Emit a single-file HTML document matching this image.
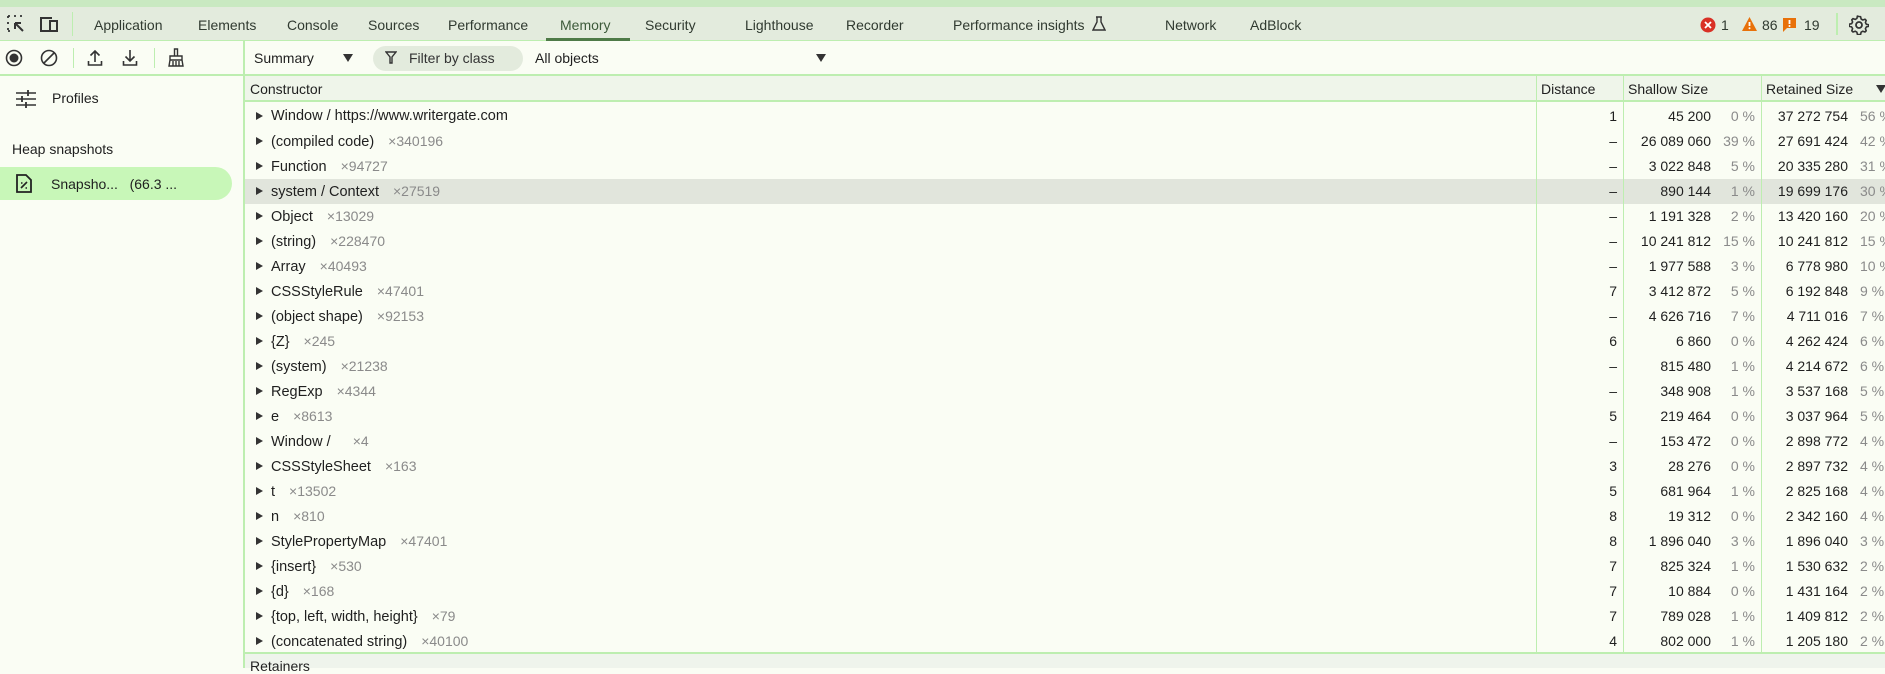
<!DOCTYPE html>
<html><head><meta charset="utf-8"><style>
*{margin:0;padding:0;box-sizing:border-box}
body{width:1885px;height:668px;overflow:hidden;background:#fafdf4;font-family:"Liberation Sans",sans-serif;font-size:14px;color:#1f1f1f;position:relative}
.a{position:absolute;white-space:nowrap}
#strip{left:0;top:0;width:1885px;height:7px;background:#c9e9c1}
#tabs{left:0;top:7px;width:1885px;height:34px;background:#e3ebdd;border-bottom:1px solid #bdeeb0}
.tab{top:17px;font-size:14px;color:#303a30}
#tb{left:0;top:41px;width:1885px;height:35px;border-bottom:2px solid #bdeeb0}
#side{left:243px;top:41px;width:2px;height:627px;background:#bdeeb0}
#hdr{left:245px;top:76px;width:1640px;height:26px;background:#eff5ea;border-bottom:2px solid #bdeeb0}
.vl{position:absolute;top:76px;height:576px;width:1px;background:#bdeeb0}
.row{position:absolute;left:245px;width:1640px;height:25px}
.tri{position:absolute;left:11px;top:8px;width:0;height:0;border-left:7px solid #333;border-top:4.5px solid transparent;border-bottom:4.5px solid transparent}
.nm{position:absolute;left:26px;top:4px;white-space:nowrap;font-size:14.5px}
.ct{color:#8a8a8a;margin-left:14px;font-size:14px}
.r{position:absolute;top:4px;text-align:right}
.g{color:#8a8a8a}
#bot{left:245px;top:652px;width:1640px;height:16px;background:#eff4ec;border-top:2px solid #bdeeb0}
</style></head><body>
<div class="a" id="strip"></div>
<div class="a" id="tabs"></div>
<svg class="a" style="left:6px;top:14px" width="22" height="22" viewBox="0 0 22 22"><path d="M2 2h3M8 2h3M14 2h3M2 2v3M2 8v3M2 14v3M2 17h3" stroke="#333" stroke-width="1.8" fill="none" stroke-dasharray="2 2"/><path d="M9 9l8 8M9 9h6M9 9v6" stroke="#333" stroke-width="2" fill="none"/></svg>
<svg class="a" style="left:38px;top:14px" width="22" height="22" viewBox="0 0 22 22"><path d="M3 17V4h11M2 17h9" stroke="#333" stroke-width="2" fill="none"/><rect x="12" y="7" width="7" height="10" stroke="#333" stroke-width="2" fill="none"/></svg>
<div class="a" style="left:72px;top:12px;width:1px;height:24px;background:#bdeeb0"></div>
<div class="a tab" style="left:94px">Application</div>
<div class="a tab" style="left:198px">Elements</div>
<div class="a tab" style="left:287px">Console</div>
<div class="a tab" style="left:368px">Sources</div>
<div class="a tab" style="left:448px">Performance</div>
<div class="a tab" style="left:560px;color:#3d5a3a">Memory</div>
<div class="a" style="left:546px;top:38px;width:84px;height:3px;background:#4e7a47"></div>
<div class="a tab" style="left:645px">Security</div>
<div class="a tab" style="left:745px">Lighthouse</div>
<div class="a tab" style="left:846px">Recorder</div>
<div class="a tab" style="left:953px">Performance insights</div>
<svg class="a" style="left:1092px;top:16px" width="14" height="16" viewBox="0 0 14 16"><path d="M4 1h6M5 1v5L1 14h12L9 6V1" stroke="#333" stroke-width="1.4" fill="none"/></svg>
<div class="a tab" style="left:1165px">Network</div>
<div class="a tab" style="left:1250px">AdBlock</div>
<svg class="a" style="left:1700px;top:17px" width="16" height="16"><circle cx="8" cy="8" r="7.5" fill="#d93025"/><path d="M5 5l6 6M11 5l-6 6" stroke="#fff" stroke-width="1.8"/></svg>
<div class="a tab" style="left:1721px">1</div>
<svg class="a" style="left:1741px;top:16px" width="17" height="16"><path d="M8.5 1L16 15H1z" fill="#e8710a"/><path d="M8.5 6v4" stroke="#fff" stroke-width="1.8"/><circle cx="8.5" cy="12.3" r="1" fill="#fff"/></svg>
<div class="a tab" style="left:1762px">86</div>
<svg class="a" style="left:1782px;top:17px" width="15" height="16"><path d="M1 1h13v10H5l-4 4z" fill="#e8710a"/><path d="M7.5 3v4" stroke="#fff" stroke-width="1.8"/><circle cx="7.5" cy="9" r="1" fill="#fff"/></svg>
<div class="a tab" style="left:1804px">19</div>
<div class="a" style="left:1836px;top:13px;width:2px;height:22px;background:#bdeeb0"></div>
<svg class="a" style="left:1849px;top:15px" width="20" height="20" viewBox="0 0 20 20"><circle cx="10" cy="10" r="3" stroke="#333" stroke-width="1.8" fill="none"/><path d="M10 1.5l1.6.2.5 2.3 1.7 1 2.2-.8 1.2 1.2-.8 2.2 1 1.7 2.3.5v1.6l-2.3.5-1 1.7.8 2.2-1.2 1.2-2.2-.8-1.7 1-.5 2.3H8.4l-.5-2.3-1.7-1-2.2.8-1.2-1.2.8-2.2-1-1.7-2.3-.5V9.2l2.3-.5 1-1.7-.8-2.2 1.2-1.2 2.2.8 1.7-1 .5-2.3z" stroke="#333" stroke-width="1.6" fill="none" stroke-linejoin="round"/></svg>

<div class="a" id="tb"></div>
<svg class="a" style="left:5px;top:49px" width="18" height="18"><circle cx="9" cy="9" r="7.5" stroke="#333" stroke-width="1.6" fill="none"/><circle cx="9" cy="9" r="4.5" fill="#333"/></svg>
<svg class="a" style="left:40px;top:49px" width="18" height="18"><circle cx="9" cy="9" r="7.5" stroke="#333" stroke-width="1.6" fill="none"/><path d="M4 14L14 4" stroke="#333" stroke-width="1.6"/></svg>
<div class="a" style="left:73px;top:48px;width:1px;height:20px;background:#bdeeb0"></div>
<svg class="a" style="left:87px;top:49px" width="16" height="18"><path d="M8 13V2M3.5 6.5L8 2l4.5 4.5M1.5 12v4h13v-4" stroke="#333" stroke-width="1.6" fill="none"/></svg>
<svg class="a" style="left:122px;top:49px" width="16" height="18"><path d="M8 1v11M3.5 7.5L8 12l4.5-4.5M1.5 12v4h13v-4" stroke="#333" stroke-width="1.6" fill="none"/></svg>
<div class="a" style="left:154px;top:48px;width:1px;height:20px;background:#bdeeb0"></div>
<svg class="a" style="left:167px;top:48px" width="18" height="20"><path d="M7.5 1h3v7h-3zM3 8h12v4H3zM3 12l-1 6h14l-1-6M6 13v5M9 13v5M12 13v5" stroke="#333" stroke-width="1.4" fill="none"/></svg>
<div class="a" style="left:254px;top:50px;font-size:14px">Summary</div>
<div class="a" style="left:343px;top:54px;border-top:8px solid #333;border-left:5px solid transparent;border-right:5px solid transparent"></div>
<div class="a" style="left:373px;top:46px;width:150px;height:25px;border-radius:13px;background:#e3ebdd"></div>
<svg class="a" style="left:385px;top:51px" width="12" height="14"><path d="M1 1h10L7 6v6H5V6z" stroke="#333" stroke-width="1.4" fill="none"/></svg>
<div class="a" style="left:409px;top:50px;color:#333">Filter by class</div>
<div class="a" style="left:535px;top:50px">All objects</div>
<div class="a" style="left:816px;top:54px;border-top:8px solid #333;border-left:5px solid transparent;border-right:5px solid transparent"></div>

<div class="a" id="side"></div>
<svg class="a" style="left:16px;top:90px" width="20" height="18"><path d="M0 3h20M0 9h20M0 15h20" stroke="#333" stroke-width="1.6"/><path d="M12 0v6M6 6v6M10 12v6" stroke="#333" stroke-width="1.8"/></svg>
<div class="a" style="left:52px;top:90px">Profiles</div>
<div class="a" style="left:12px;top:141px">Heap snapshots</div>
<div class="a" style="left:0;top:167px;width:232px;height:33px;background:#c8f7b8;border-radius:0 17px 17px 0"></div>
<svg class="a" style="left:16px;top:174px" width="16" height="19"><path d="M1 1h9l5 5v12H1z" stroke="#222" stroke-width="1.8" fill="none"/><path d="M5 14l6-6M5 9h1.5M9.5 14H11" stroke="#222" stroke-width="1.6"/></svg>
<div class="a" style="left:51px;top:176px">Snapsho...&nbsp;&nbsp;&nbsp;(66.3 ...</div>

<div class="a" id="hdr"></div>
<div class="a" style="left:250px;top:81px">Constructor</div>
<div class="a" style="left:1541px;top:81px">Distance</div>
<div class="a" style="left:1628px;top:81px">Shallow Size</div>
<div class="a" style="left:1766px;top:81px">Retained Size</div>
<div class="a" style="left:1876px;top:85px;border-top:8px solid #333;border-left:5px solid transparent;border-right:5px solid transparent"></div>

<div class="row" style="top:104px"><div class="tri"></div><div class="nm">Window / https://www.writergate.com</div><div class="r" style="left:1291px;width:81px">1</div><div class="r" style="left:1380px;width:86px">45 200</div><div class="r g" style="left:1466px;width:44px">0 %</div><div class="r" style="left:1520px;width:83px">37 272 754</div><div class="a g" style="left:1615px;top:4px">56 %</div></div>
<div class="row" style="top:129px"><div class="tri"></div><div class="nm">(compiled code)<span class="ct">×340196</span></div><div class="r" style="left:1291px;width:81px">–</div><div class="r" style="left:1380px;width:86px">26 089 060</div><div class="r g" style="left:1466px;width:44px">39 %</div><div class="r" style="left:1520px;width:83px">27 691 424</div><div class="a g" style="left:1615px;top:4px">42 %</div></div>
<div class="row" style="top:154px"><div class="tri"></div><div class="nm">Function<span class="ct">×94727</span></div><div class="r" style="left:1291px;width:81px">–</div><div class="r" style="left:1380px;width:86px">3 022 848</div><div class="r g" style="left:1466px;width:44px">5 %</div><div class="r" style="left:1520px;width:83px">20 335 280</div><div class="a g" style="left:1615px;top:4px">31 %</div></div>
<div class="row" style="top:179px;background:#e1e5dc"><div class="tri"></div><div class="nm">system / Context<span class="ct">×27519</span></div><div class="r" style="left:1291px;width:81px">–</div><div class="r" style="left:1380px;width:86px">890 144</div><div class="r g" style="left:1466px;width:44px">1 %</div><div class="r" style="left:1520px;width:83px">19 699 176</div><div class="a g" style="left:1615px;top:4px">30 %</div></div>
<div class="row" style="top:204px"><div class="tri"></div><div class="nm">Object<span class="ct">×13029</span></div><div class="r" style="left:1291px;width:81px">–</div><div class="r" style="left:1380px;width:86px">1 191 328</div><div class="r g" style="left:1466px;width:44px">2 %</div><div class="r" style="left:1520px;width:83px">13 420 160</div><div class="a g" style="left:1615px;top:4px">20 %</div></div>
<div class="row" style="top:229px"><div class="tri"></div><div class="nm">(string)<span class="ct">×228470</span></div><div class="r" style="left:1291px;width:81px">–</div><div class="r" style="left:1380px;width:86px">10 241 812</div><div class="r g" style="left:1466px;width:44px">15 %</div><div class="r" style="left:1520px;width:83px">10 241 812</div><div class="a g" style="left:1615px;top:4px">15 %</div></div>
<div class="row" style="top:254px"><div class="tri"></div><div class="nm">Array<span class="ct">×40493</span></div><div class="r" style="left:1291px;width:81px">–</div><div class="r" style="left:1380px;width:86px">1 977 588</div><div class="r g" style="left:1466px;width:44px">3 %</div><div class="r" style="left:1520px;width:83px">6 778 980</div><div class="a g" style="left:1615px;top:4px">10 %</div></div>
<div class="row" style="top:279px"><div class="tri"></div><div class="nm">CSSStyleRule<span class="ct">×47401</span></div><div class="r" style="left:1291px;width:81px">7</div><div class="r" style="left:1380px;width:86px">3 412 872</div><div class="r g" style="left:1466px;width:44px">5 %</div><div class="r" style="left:1520px;width:83px">6 192 848</div><div class="a g" style="left:1615px;top:4px">9 %</div></div>
<div class="row" style="top:304px"><div class="tri"></div><div class="nm">(object shape)<span class="ct">×92153</span></div><div class="r" style="left:1291px;width:81px">–</div><div class="r" style="left:1380px;width:86px">4 626 716</div><div class="r g" style="left:1466px;width:44px">7 %</div><div class="r" style="left:1520px;width:83px">4 711 016</div><div class="a g" style="left:1615px;top:4px">7 %</div></div>
<div class="row" style="top:329px"><div class="tri"></div><div class="nm">{Z}<span class="ct">×245</span></div><div class="r" style="left:1291px;width:81px">6</div><div class="r" style="left:1380px;width:86px">6 860</div><div class="r g" style="left:1466px;width:44px">0 %</div><div class="r" style="left:1520px;width:83px">4 262 424</div><div class="a g" style="left:1615px;top:4px">6 %</div></div>
<div class="row" style="top:354px"><div class="tri"></div><div class="nm">(system)<span class="ct">×21238</span></div><div class="r" style="left:1291px;width:81px">–</div><div class="r" style="left:1380px;width:86px">815 480</div><div class="r g" style="left:1466px;width:44px">1 %</div><div class="r" style="left:1520px;width:83px">4 214 672</div><div class="a g" style="left:1615px;top:4px">6 %</div></div>
<div class="row" style="top:379px"><div class="tri"></div><div class="nm">RegExp<span class="ct">×4344</span></div><div class="r" style="left:1291px;width:81px">–</div><div class="r" style="left:1380px;width:86px">348 908</div><div class="r g" style="left:1466px;width:44px">1 %</div><div class="r" style="left:1520px;width:83px">3 537 168</div><div class="a g" style="left:1615px;top:4px">5 %</div></div>
<div class="row" style="top:404px"><div class="tri"></div><div class="nm">e<span class="ct">×8613</span></div><div class="r" style="left:1291px;width:81px">5</div><div class="r" style="left:1380px;width:86px">219 464</div><div class="r g" style="left:1466px;width:44px">0 %</div><div class="r" style="left:1520px;width:83px">3 037 964</div><div class="a g" style="left:1615px;top:4px">5 %</div></div>
<div class="row" style="top:429px"><div class="tri"></div><div class="nm">Window /&nbsp;&nbsp;<span class="ct">×4</span></div><div class="r" style="left:1291px;width:81px">–</div><div class="r" style="left:1380px;width:86px">153 472</div><div class="r g" style="left:1466px;width:44px">0 %</div><div class="r" style="left:1520px;width:83px">2 898 772</div><div class="a g" style="left:1615px;top:4px">4 %</div></div>
<div class="row" style="top:454px"><div class="tri"></div><div class="nm">CSSStyleSheet<span class="ct">×163</span></div><div class="r" style="left:1291px;width:81px">3</div><div class="r" style="left:1380px;width:86px">28 276</div><div class="r g" style="left:1466px;width:44px">0 %</div><div class="r" style="left:1520px;width:83px">2 897 732</div><div class="a g" style="left:1615px;top:4px">4 %</div></div>
<div class="row" style="top:479px"><div class="tri"></div><div class="nm">t<span class="ct">×13502</span></div><div class="r" style="left:1291px;width:81px">5</div><div class="r" style="left:1380px;width:86px">681 964</div><div class="r g" style="left:1466px;width:44px">1 %</div><div class="r" style="left:1520px;width:83px">2 825 168</div><div class="a g" style="left:1615px;top:4px">4 %</div></div>
<div class="row" style="top:504px"><div class="tri"></div><div class="nm">n<span class="ct">×810</span></div><div class="r" style="left:1291px;width:81px">8</div><div class="r" style="left:1380px;width:86px">19 312</div><div class="r g" style="left:1466px;width:44px">0 %</div><div class="r" style="left:1520px;width:83px">2 342 160</div><div class="a g" style="left:1615px;top:4px">4 %</div></div>
<div class="row" style="top:529px"><div class="tri"></div><div class="nm">StylePropertyMap<span class="ct">×47401</span></div><div class="r" style="left:1291px;width:81px">8</div><div class="r" style="left:1380px;width:86px">1 896 040</div><div class="r g" style="left:1466px;width:44px">3 %</div><div class="r" style="left:1520px;width:83px">1 896 040</div><div class="a g" style="left:1615px;top:4px">3 %</div></div>
<div class="row" style="top:554px"><div class="tri"></div><div class="nm">{insert}<span class="ct">×530</span></div><div class="r" style="left:1291px;width:81px">7</div><div class="r" style="left:1380px;width:86px">825 324</div><div class="r g" style="left:1466px;width:44px">1 %</div><div class="r" style="left:1520px;width:83px">1 530 632</div><div class="a g" style="left:1615px;top:4px">2 %</div></div>
<div class="row" style="top:579px"><div class="tri"></div><div class="nm">{d}<span class="ct">×168</span></div><div class="r" style="left:1291px;width:81px">7</div><div class="r" style="left:1380px;width:86px">10 884</div><div class="r g" style="left:1466px;width:44px">0 %</div><div class="r" style="left:1520px;width:83px">1 431 164</div><div class="a g" style="left:1615px;top:4px">2 %</div></div>
<div class="row" style="top:604px"><div class="tri"></div><div class="nm">{top, left, width, height}<span class="ct">×79</span></div><div class="r" style="left:1291px;width:81px">7</div><div class="r" style="left:1380px;width:86px">789 028</div><div class="r g" style="left:1466px;width:44px">1 %</div><div class="r" style="left:1520px;width:83px">1 409 812</div><div class="a g" style="left:1615px;top:4px">2 %</div></div>
<div class="row" style="top:629px"><div class="tri"></div><div class="nm">(concatenated string)<span class="ct">×40100</span></div><div class="r" style="left:1291px;width:81px">4</div><div class="r" style="left:1380px;width:86px">802 000</div><div class="r g" style="left:1466px;width:44px">1 %</div><div class="r" style="left:1520px;width:83px">1 205 180</div><div class="a g" style="left:1615px;top:4px">2 %</div></div>

<div class="vl" style="left:1536px"></div>
<div class="vl" style="left:1623px"></div>
<div class="vl" style="left:1761px"></div>
<div class="a" id="bot"></div>
<div class="a" style="left:250px;top:658px;font-size:14px">Retainers</div>
</body></html>
